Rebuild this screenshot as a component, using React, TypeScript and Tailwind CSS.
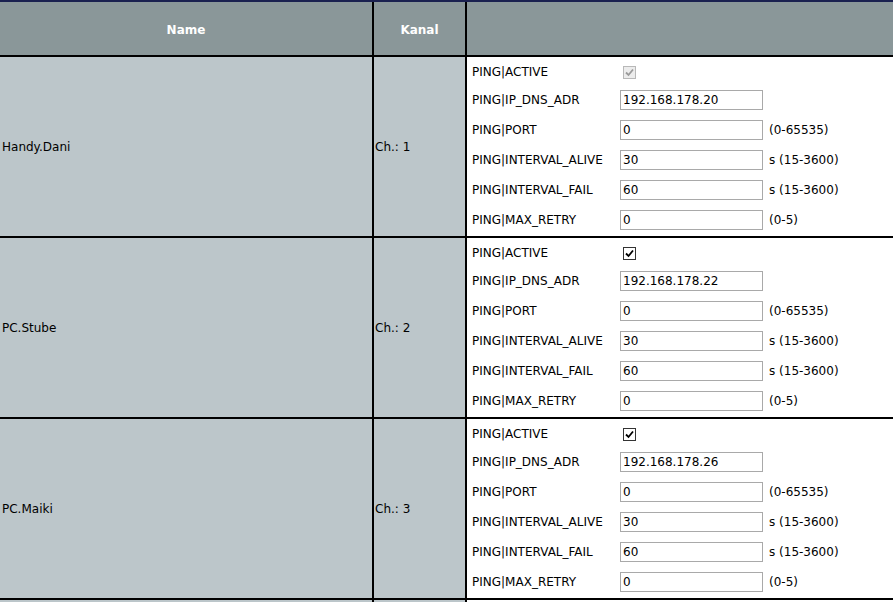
const devices = [
  { name: "Handy.Dani", ch: 1, ip: "192.168.178.20", active: "disabled" },
  { name: "PC.Stube", ch: 2, ip: "192.168.178.22", active: "on" },
  { name: "PC.Maiki", ch: 3, ip: "192.168.178.26", active: "on" },
];

function Check({ disabled }: { disabled?: boolean }) {
  return (
    <span
      className={
        "ml-[3px] flex h-[13px] w-[13px] items-center justify-center border " +
        (disabled ? "border-[#b8b8b8] bg-[#ececec]" : "border-[#333] bg-white")
      }
    >
      <svg width="9" height="9" viewBox="0 0 9 9">
        <path
          d="M1 4.5 L3.5 7 L8 1.5"
          fill="none"
          stroke={disabled ? "#9a9a9a" : "#000"}
          strokeWidth="1.8"
        />
      </svg>
    </span>
  );
}

function Field({ label, value, unit }: { label: string; value: string; unit?: string }) {
  return (
    <div className="flex h-[30px] items-center pt-[1px]">
      <span className="w-[148px] shrink-0">{label}</span>
      <span className="flex h-[20px] w-[143px] items-center border border-[#a9a9a9] bg-white px-[2px]">
        {value}
      </span>
      {unit && <span className="ml-[6px]">{unit}</span>}
    </div>
  );
}

export default function App() {
  return (
    <div
      className="h-[602px] w-[893px] overflow-hidden bg-black text-[12px] text-black"
      style={{ fontFamily: '"DejaVu Sans", Verdana, sans-serif' }}
    >
      <div className="h-[2px] bg-[#1a2150]" />
      <div className="grid grid-cols-[372px_91px_426px] gap-[2px]">
        <div className="flex h-[53px] items-center justify-center bg-[#8a9799] pt-[2px] font-semibold text-white">
          Name
        </div>
        <div className="flex h-[53px] items-center justify-center bg-[#8a9799] pt-[2px] font-semibold text-white">
          Kanal
        </div>
        <div className="h-[53px] bg-[#8a9799]" />

        {devices.map((d) => (
          <div key={d.name} className="contents">
            <div className="flex h-[179px] items-center bg-[#bcc6ca] pl-[2px] pt-[1px]">{d.name}</div>
            <div className="flex h-[179px] items-center bg-[#bcc6ca] pl-[1px] pt-[1px]">Ch.: {d.ch}</div>
            <div className="h-[179px] bg-white pl-[5px] pt-[2px]">
              <div className="flex h-[25px] items-center pt-[1px]">
                <span className="w-[148px] shrink-0">PING|ACTIVE</span>
                <Check disabled={d.active === "disabled"} />
              </div>
              <Field label="PING|IP_DNS_ADR" value={d.ip} />
              <Field label="PING|PORT" value="0" unit="(0-65535)" />
              <Field label="PING|INTERVAL_ALIVE" value="30" unit="s (15-3600)" />
              <Field label="PING|INTERVAL_FAIL" value="60" unit="s (15-3600)" />
              <Field label="PING|MAX_RETRY" value="0" unit="(0-5)" />
            </div>
          </div>
        ))}

        {/* start of the next row, cut by the window */}
        <div className="h-[20px] bg-[#bcc6ca]" />
        <div className="h-[20px] bg-[#bcc6ca]" />
        <div className="h-[20px] bg-white" />
      </div>
    </div>
  );
}
